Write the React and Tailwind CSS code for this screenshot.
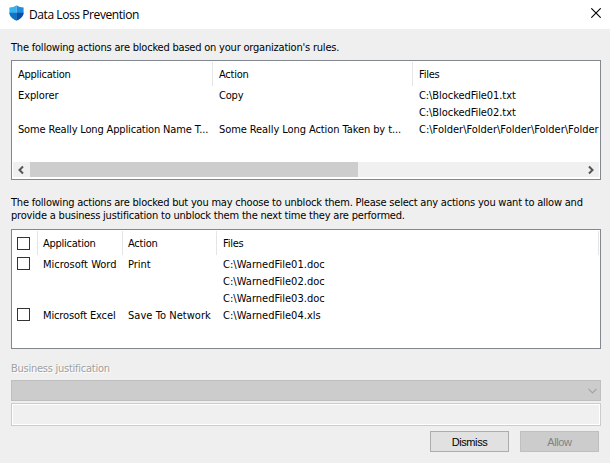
import React from "react";

function Shield() {
  return (
    <svg width="15" height="16" viewBox="0 0 15 16" className="block shrink-0">
      <path d="M7.5 0.3C5.4 1.8 3 2.4 0.4 2.5V7.5C0.4 11 3.4 14 7.5 15.6Z" fill="#33b4ee" />
      <path d="M7.5 0.3C9.6 1.8 12 2.4 14.6 2.5V7.5C14.6 11 11.6 14 7.5 15.6Z" fill="#1d8ddc" />
      <path d="M0.4 7.8H7.5V15.6C3.4 14 0.5 11 0.4 7.8Z" fill="#1072c8" />
      <path d="M14.6 7.8H7.5V15.6C11.6 14 14.5 11 14.6 7.8Z" fill="#0c4fa6" />
    </svg>
  );
}

function Header({ className, children }) {
  return <div className={`h-6 border-r border-[#e5e5e5] leading-6 tracking-[-0.25px] ${className}`}>{children}</div>;
}

function Check() {
  return <span className="block size-[13px] shrink-0 border border-[#333] bg-white" />;
}

function Chevron({ d, color }) {
  return (
    <svg width="10" height="10" viewBox="0 0 10 10" fill="none" stroke={color} strokeWidth="2" className="block">
      <path d={d} />
    </svg>
  );
}

export default function App() {
  return (
    <div className="flex h-[463px] w-[610px] flex-col overflow-hidden whitespace-nowrap bg-[#efefef] font-['DejaVu_Sans_Condensed','DejaVu_Sans',sans-serif] text-[11px] leading-[17px] text-black">
      <header className="flex h-[29px] items-center bg-white pl-[9px] pr-[9px] pb-[3px]">
        <Shield />
        <h1 className="ml-[5px] mt-[3px] font-['Open_Sans',sans-serif] text-[12px] leading-4 tracking-[-0.42px]"><span>Data Loss Prevention</span></h1>
        <svg width="10" height="10" viewBox="0 0 10 10" className="ml-auto" stroke="#000" strokeWidth="1.1">
          <path d="M0.3 0.3L9.7 9.7M9.7 0.3L0.3 9.7" />
        </svg>
      </header>

      <main className="flex flex-col pl-[11px]">
        <p className="mt-[10px] h-[21px] tracking-[-0.205px]"><span>The following actions are blocked based on your organization's rules.</span></p>

        <section className="flex h-[120px] w-[590px] flex-col overflow-hidden border border-[#828790] bg-white p-px">
          <div className="flex">
            <Header className="w-[200px] pl-[5px] pt-px">Application</Header>
            <Header className="w-[200px] pl-[6px] pt-px">Action</Header>
            <Header className="w-[186px] border-r-0 pl-[6px] pt-px">Files</Header>
          </div>
          <div className="mt-px flex">
            <div className="w-[200px] pl-[5px]">
              <div className="h-[34px] tracking-[-0.1px]"><span>Explorer</span></div>
              <div className="tracking-[-0.16px]"><span>Some Really Long Application Name T...</span></div>
            </div>
            <div className="w-[200px] pl-[6px]">
              <div className="h-[34px] tracking-[-0.2px]"><span>Copy</span></div>
              <div className="tracking-[-0.08px]"><span>Some Really Long Action Taken by t...</span></div>
            </div>
            <div className="w-[186px] overflow-hidden pl-[6px]">
              <div className="tracking-[-0.07px]"><span>C:\BlockedFile01.txt</span></div>
              <div className="tracking-[-0.07px]"><span>C:\BlockedFile02.txt</span></div>
              <div><span>C:\Folder\Folder\Folder\Folder\Folder</span></div>
            </div>
          </div>
          <div className="mb-px mt-auto flex h-[15px] items-center bg-[#f0f0f0]">
            <div className="flex w-[17px] pl-[3px]"><Chevron color="#555" d="M7 1.5L3.5 5L7 8.5" /></div>
            <div className="h-full w-[328px] bg-[#cdcdcd]" />
            <div className="ml-auto flex w-[17px] justify-center"><Chevron color="#555" d="M3 1.5L6.5 5L3 8.5" /></div>
          </div>
        </section>

        <p className="mt-4 h-[33px] leading-[13px]">
          <span className="tracking-[-0.213px]">The following actions are blocked but you may choose to unblock them. Please select any actions you want to allow and</span><br />
          <span className="tracking-[-0.195px]">provide a business justification to unblock them the next time they are performed.</span>
        </p>

        <section className="h-[120px] w-[590px] overflow-hidden border border-[#828790] bg-white p-px">
          <div className="flex">
            <Header className="w-[25px] pl-1 pt-[6px]"><Check /></Header>
            <Header className="w-[85px] pl-[5px] pt-px">Application</Header>
            <Header className="w-[94px] pl-[5px] pt-px">Action</Header>
            <Header className="w-[382px] pl-[6px] pt-px">Files</Header>
          </div>
          <div className="mt-px flex">
            <div className="w-[25px] pl-1 pt-px">
              <div className="h-[51px]"><Check /></div>
              <Check />
            </div>
            <div className="w-[85px] pl-[5px]">
              <div className="h-[51px]"><span>Microsoft Word</span></div>
              <div className="tracking-[-0.12px]"><span>Microsoft Excel</span></div>
            </div>
            <div className="w-[94px] pl-[5px]">
              <div className="h-[51px]"><span>Print</span></div>
              <div className="tracking-[0.05px]"><span>Save To Network</span></div>
            </div>
            <div className="pl-[6px] tracking-[0.03px]">
              <div><span>C:\WarnedFile01.doc</span></div>
              <div><span>C:\WarnedFile02.doc</span></div>
              <div><span>C:\WarnedFile03.doc</span></div>
              <div><span>C:\WarnedFile04.xls</span></div>
            </div>
          </div>
        </section>

        <label className="mt-[11px] h-5 tracking-[-0.25px] text-[#a0a0a0] [text-shadow:1px_1px_0_#fff]"><span>Business justification</span></label>
        <div className="flex h-[21px] w-[590px] items-center justify-end border border-[#bfbfbf] bg-[#cccccc] pr-[3px]">
          <svg width="9" height="6" viewBox="0 0 9 6" fill="none" stroke="#a3a3a3" strokeWidth="1.2"><path d="M0.5 0.8L4.5 4.8L8.5 0.8" /></svg>
        </div>
        <div className="mt-[2px] h-[23px] w-[590px] border border-[#cccccc] bg-white p-px"><div className="h-full bg-[#f0f0f0]" /></div>
        <div className="mt-[5px] flex gap-[11px] pl-[419px] font-['Liberation_Sans',sans-serif] text-[11px] tracking-[-0.4px]">
          <button className="h-[21px] w-[79px] border border-[#adadad] bg-[#e1e1e1] pt-px leading-[19px]"><span>Dismiss</span></button>
          <button className="h-[21px] w-[79px] border border-[#bfbfbf] bg-[#cccccc] pt-px leading-[19px] text-[#838383]"><span>Allow</span></button>
        </div>
      </main>
    </div>
  );
}
